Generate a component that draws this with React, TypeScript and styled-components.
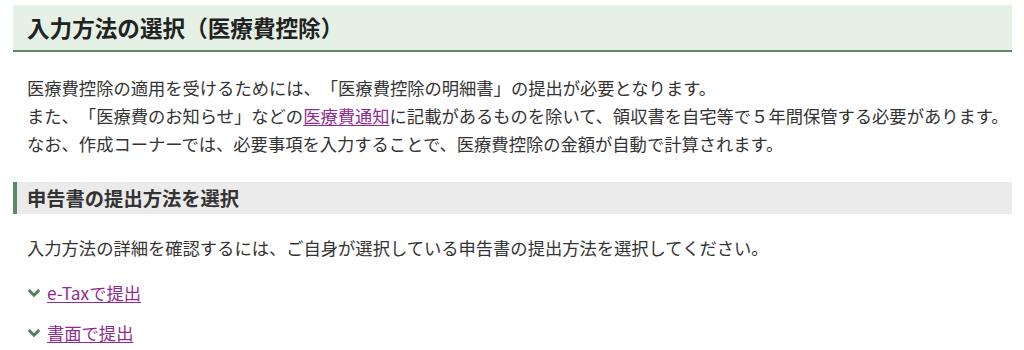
import React from "react";
import styled, { createGlobalStyle } from "styled-components";

const Global = createGlobalStyle`
  html, body { margin: 0; padding: 0; background: #fff; }
  body {
    font-family: "Noto Sans CJK JP", "Noto Sans", sans-serif;
    color: #333;
    text-spacing-trim: space-all;
  }
`;

const Page = styled.div`
  padding: 5px 12px 0 13px;
  display: flex;
  flex-direction: column;
`;

const Title = styled.h1`
  margin: 0;
  background: #e6f1e6;
  border-bottom: 2px solid #5b8a68;
  height: 45px;
  display: flex;
  align-items: center;
  padding-left: 14px;
  font-size: 22.6px;
  font-weight: 700;
  color: #222;
`;

const Para = styled.p<{ $mt: number }>`
  margin: ${(p) => p.$mt}px 0 0;
  padding-left: 14px;
  font-size: 17.3px;
  line-height: 28px;
  color: #333;
`;

const SubTitle = styled.h2`
  margin: 24px 0 0;
  background: #ebebeb;
  border-left: 4px solid #5b8a68;
  height: 32px;
  display: flex;
  align-items: center;
  padding-left: 10px;
  font-size: 19.3px;
  font-weight: 700;
  color: #333;
`;

const Link = styled.a`
  color: #912a8f;
  text-decoration: underline;
  text-underline-offset: 2px;
  text-decoration-thickness: 1px;
`;

const LinkRow = styled.div<{ $mt: number }>`
  margin-top: ${(p) => p.$mt}px;
  padding-left: 14px;
  display: flex;
  align-items: center;
  gap: 6px;
  font-size: 17.3px;
  line-height: 28px;
`;

const Chevron = () => (
  <svg width="14" height="10" viewBox="0 0 14 10" aria-hidden="true">
    <path d="M1.8 2 L7 7.2 L12.2 2" fill="none" stroke="#4d7d5b" strokeWidth="2.8" />
  </svg>
);

export default function App() {
  return (
    <>
      <Global />
      <Page>
        <Title>入力方法の選択（医療費控除）</Title>
        <Para $mt={22}>
          医療費控除の適用を受けるためには、「医療費控除の明細書」の提出が必要となります。
          <br />
          また、「医療費のお知らせ」などの<Link href="#">医療費通知</Link>に記載があるものを除いて、領収書を自宅等で５年間保管する必要があります。
          <br />
          なお、作成コーナーでは、必要事項を入力することで、医療費控除の金額が自動で計算されます。
        </Para>
        <SubTitle>申告書の提出方法を選択</SubTitle>
        <Para $mt={20}>
          入力方法の詳細を確認するには、ご自身が選択している申告書の提出方法を選択してください。
        </Para>
        <LinkRow $mt={17}>
          <Chevron />
          <Link href="#">e-Taxで提出</Link>
        </LinkRow>
        <LinkRow $mt={12}>
          <Chevron />
          <Link href="#">書面で提出</Link>
        </LinkRow>
      </Page>
    </>
  );
}
